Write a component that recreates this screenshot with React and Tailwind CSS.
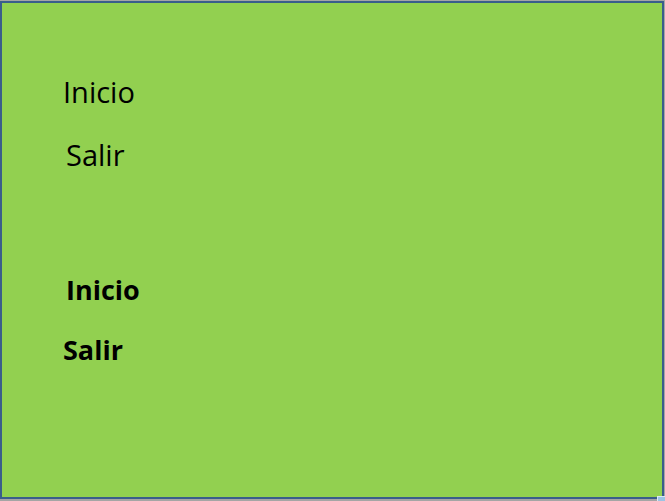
import React from "react";

const App = () => {
  return (
    <div className="w-[665px] h-[501px] bg-[#a5a5a5] pt-px pr-px pb-[2px] relative">
      <div
        className="w-full h-full border-2 border-[#3a5d8b] bg-[#92d050] text-black"
        style={{ fontFamily: '"Open Sans", "Liberation Sans", sans-serif' }}
      >
        <div className="flex flex-col pl-[61px] pt-[70px]">
          {/* plain menu */}
          <p className="text-[29px] leading-[38px] h-[38px]">Inicio</p>
          <p className="text-[29px] leading-[38px] h-[38px] mt-[25px] ml-[3px]">Salir</p>

          {/* bold menu */}
          <p className="text-[27px] leading-[36px] h-[36px] mt-[98px] ml-[3px] font-bold">Inicio</p>
          <p className="text-[27px] leading-[36px] h-[36px] mt-[24px] font-bold">Salir</p>
        </div>
      </div>
      {/* little resize corner */}
      <div className="absolute right-0 bottom-0 w-[8px] h-[5px] bg-[#9cc4e4] border-t border-l border-[#dbe8f3]"></div>
    </div>
  );
};

export default App;
